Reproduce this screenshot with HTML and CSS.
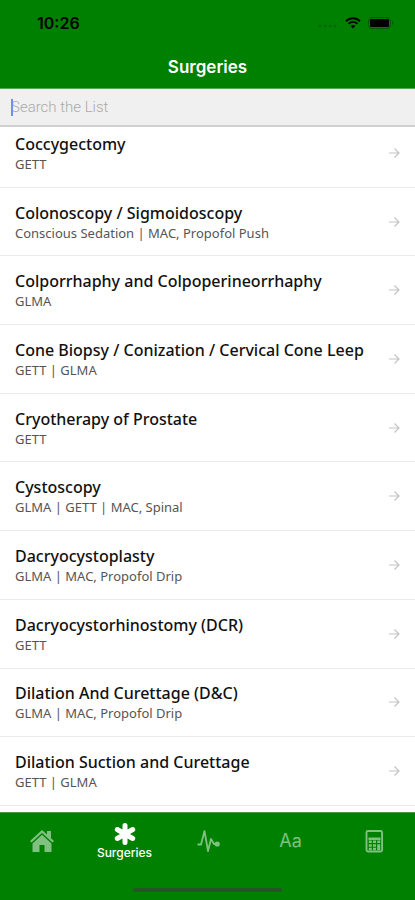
FILE: index.html
```html
<!DOCTYPE html>
<html lang="en">
<head>
<meta charset="utf-8">
<meta name="viewport" content="width=device-width, initial-scale=1">
<title>Surgeries</title>
<link rel="stylesheet" href="styles.css">
</head>
<body>
<svg class="sprite" aria-hidden="true">
  <symbol id="arrow" viewBox="0 0 12 12"><path d="M1 6h10M6.500 1.500 11 6 6.500 10.500" fill="none" stroke="currentColor" stroke-width="1.200"/></symbol>
</svg>
<div class="app">
  <header class="header">
    <div class="status">
      <time class="clock">10:26</time>
      <div class="signals">
        <svg class="dots" viewBox="0 0 20 4" aria-hidden="true"><circle cx="2" cy="2" r="1.300"/><circle cx="7" cy="2" r="1.300"/><circle cx="12" cy="2" r="1.300"/><circle cx="17" cy="2" r="1.300"/></svg>
        <svg class="wifi" viewBox="0 0 16 12" aria-hidden="true"><path d="M1 4.200C5 .3 11 .3 15 4.200M3.500 6.900c2.700-2.500 6.300-2.500 9 0" fill="none" stroke="currentColor" stroke-width="1.900"/><path d="M5.600 9c1.500-1.300 3.300-1.300 4.800 0L8 11.600z" fill="currentColor"/></svg>
        <svg class="battery" viewBox="0 0 26 12" aria-hidden="true"><rect x=".5" y=".5" width="22" height="11" rx="3" fill="none" stroke="#000" stroke-opacity=".3"/><rect x="2" y="2" width="19" height="8" rx="1"/><path d="M24 4c1.600.6 1.600 3.400 0 4z" fill-opacity=".35"/></svg>
      </div>
    </div>
    <h1 class="title">Surgeries</h1>
  </header>
  <div class="search">
    <input class="search-input" type="text" placeholder="Search the List" aria-label="Search the List">
    <span class="caret"></span>
  </div>
  <main class="content">
    <ul class="list">
      <li><a class="row" href="#"><span class="text"><span class="name">Coccygectomy</span><span class="detail">GETT</span></span><svg class="arrow" aria-hidden="true"><use href="#arrow"/></svg></a></li>
      <li><a class="row" href="#"><span class="text"><span class="name">Colonoscopy / Sigmoidoscopy</span><span class="detail">Conscious Sedation | MAC, Propofol Push</span></span><svg class="arrow" aria-hidden="true"><use href="#arrow"/></svg></a></li>
      <li><a class="row" href="#"><span class="text"><span class="name">Colporrhaphy and Colpoperineorrhaphy</span><span class="detail">GLMA</span></span><svg class="arrow" aria-hidden="true"><use href="#arrow"/></svg></a></li>
      <li><a class="row" href="#"><span class="text"><span class="name">Cone Biopsy / Conization / Cervical Cone Leep</span><span class="detail">GETT | GLMA</span></span><svg class="arrow" aria-hidden="true"><use href="#arrow"/></svg></a></li>
      <li><a class="row" href="#"><span class="text"><span class="name">Cryotherapy of Prostate</span><span class="detail">GETT</span></span><svg class="arrow" aria-hidden="true"><use href="#arrow"/></svg></a></li>
      <li><a class="row" href="#"><span class="text"><span class="name">Cystoscopy</span><span class="detail">GLMA | GETT | MAC, Spinal</span></span><svg class="arrow" aria-hidden="true"><use href="#arrow"/></svg></a></li>
      <li><a class="row" href="#"><span class="text"><span class="name">Dacryocystoplasty</span><span class="detail">GLMA | MAC, Propofol Drip</span></span><svg class="arrow" aria-hidden="true"><use href="#arrow"/></svg></a></li>
      <li><a class="row" href="#"><span class="text"><span class="name">Dacryocystorhinostomy (DCR)</span><span class="detail">GETT</span></span><svg class="arrow" aria-hidden="true"><use href="#arrow"/></svg></a></li>
      <li><a class="row" href="#"><span class="text"><span class="name">Dilation And Curettage (D&amp;C)</span><span class="detail">GLMA | MAC, Propofol Drip</span></span><svg class="arrow" aria-hidden="true"><use href="#arrow"/></svg></a></li>
      <li><a class="row" href="#"><span class="text"><span class="name">Dilation Suction and Curettage</span><span class="detail">GETT | GLMA</span></span><svg class="arrow" aria-hidden="true"><use href="#arrow"/></svg></a></li>
    </ul>
  </main>
  <footer class="footer">
    <nav class="tabs" aria-label="Sections">
      <a class="tab" href="#" aria-label="Home"><svg class="icon" viewBox="0 0 24 24" aria-hidden="true"><path d="M12 1 0 12l1.500 1.600L12 4l10.500 9.600L24 12l-3-2.800V2h-4v3.500z"/><path d="M12 5.800 2.500 14.400V23H9.500v-7h5v7h7v-8.600z"/></svg></a>
      <a class="tab active" href="#" aria-current="page"><svg class="icon" viewBox="0 0 24 24" aria-hidden="true"><path d="M12 3.500v17M4.300 7.500l15.400 9M19.700 7.500l-15.400 9" fill="none" stroke="currentColor" stroke-width="5" stroke-linecap="round"/></svg><span class="label">Surgeries</span></a>
      <a class="tab" href="#" aria-label="Vitals"><svg class="icon" viewBox="0 0 24 24" aria-hidden="true"><path d="M1.500 15.500H5L8.500 2l3.500 20 3-12 3 5h3" fill="none" stroke="currentColor" stroke-width="1.800" stroke-linejoin="round"/><circle cx="21.200" cy="15" r="2.600"/></svg></a>
      <a class="tab" href="#"><span class="letters">Aa</span></a>
      <a class="tab" href="#" aria-label="Calculator"><svg class="icon" viewBox="0 0 24 24" aria-hidden="true"><rect x="4.500" y="2" width="15.600" height="20.500" rx="1.500" fill="none" stroke="currentColor" stroke-width="1.900"/><path d="M6.500 8.500h12v2.500h-12z"/><path d="M6.800 11.500h3v2.500h-3zm4.200 0h3v2.500h-3zm4.200 0h3v2.500h-3zm-8.400 3.700h3v2.500h-3zm4.200 0h3v2.500h-3zm-4.200 3.500h3v2.500h-3zm4.200 0h3v2.500h-3zm4.200-3.500h3v6h-3z"/></svg></a>
    </nav>
    <div class="home-bar"></div>
  </footer>
</div>
</body>
</html>
```

FILE: styles.css
```css
* { box-sizing: border-box; }

body {
  margin: 0;
  background: #fff;
  color: #111;
  font-family: "Noto Sans", sans-serif;
}

a { color: inherit; text-decoration: none; }

.sprite { display: none; }

.app {
  display: flex;
  flex-direction: column;
  height: 100vh;
}

.header {
  padding-bottom: 10px;
  background: #008000;
  border-bottom: 1px solid #55a555;
  font-family: Inter, sans-serif;
}

.status {
  display: flex;
  align-items: center;
  justify-content: space-between;
  padding: 12px 21px 0 37px;
  color: #000;
}

.clock { font-size: 16px; font-weight: 600; line-height: 22px; }

.signals { display: flex; align-items: center; gap: 7px; }
.dots { width: 20px; height: 4px; margin-top: 6px; opacity: .2; }
.wifi { width: 16px; height: 12px; }
.battery { width: 26px; height: 12px; }

.title {
  margin: 22px 0 0;
  color: #fff;
  font-size: 17px;
  font-weight: 600;
  line-height: 22px;
  text-align: center;
}

.search {
  position: relative;
  z-index: 1;
  background: #f0f0f0;
  border-bottom: 2px solid #d0d0d0;
}

.search-input {
  display: block;
  width: 100%;
  height: 36px;
  padding: 0 11px;
  border: 0;
  outline: 0;
  background: transparent;
  color: #111;
  font: 300 15px Roboto, sans-serif;
}

.search-input::placeholder { color: #aaa; opacity: 1; }

.caret {
  position: absolute;
  top: 10px;
  left: 11px;
  width: 2px;
  height: 17px;
  background: #6f8fe8;
}

.content {
  display: flex;
  flex: 1;
  flex-direction: column;
  min-height: 0;
  overflow: hidden;
  padding-bottom: 6px;
}

/* The list is scrolled slightly under the search bar. */
.list {
  display: grid;
  flex: 1;
  grid-auto-rows: 1fr;
  margin: -8px 0 0;
  padding: 0;
  list-style: none;
}

.list li { border-bottom: 1px solid #ebebeb; }

.row {
  display: flex;
  align-items: center;
  justify-content: space-between;
  height: 100%;
  padding: 0 15px;
}

.text { display: flex; flex-direction: column; }
.name { font-size: 16px; font-weight: 500; line-height: 22px; }
.detail { color: #555; font-size: 13px; font-weight: 400; line-height: 18px; }
.arrow { width: 12px; height: 12px; color: #c4c4c4; }

.footer {
  padding: 8px 0;
  background: #008000;
  border-top: 1px solid #459c45;
  color: #fff;
}

.tabs { display: grid; grid-template-columns: repeat(5, 1fr); height: 40px; }

.tab {
  display: flex;
  flex-direction: column;
  align-items: center;
  justify-content: center;
  color: #80c080;
  font-family: Inter, sans-serif;
}

.active { color: #fff; }
.icon { width: 24px; height: 24px; fill: currentColor; }
.label { font-size: 12px; font-weight: 500; line-height: 14px; }
.letters { font-size: 18px; line-height: 24px; }

.home-bar {
  width: 36%;
  height: 4px;
  margin: 27px auto 0;
  border-radius: 2px;
  background: #285228;
}
```
